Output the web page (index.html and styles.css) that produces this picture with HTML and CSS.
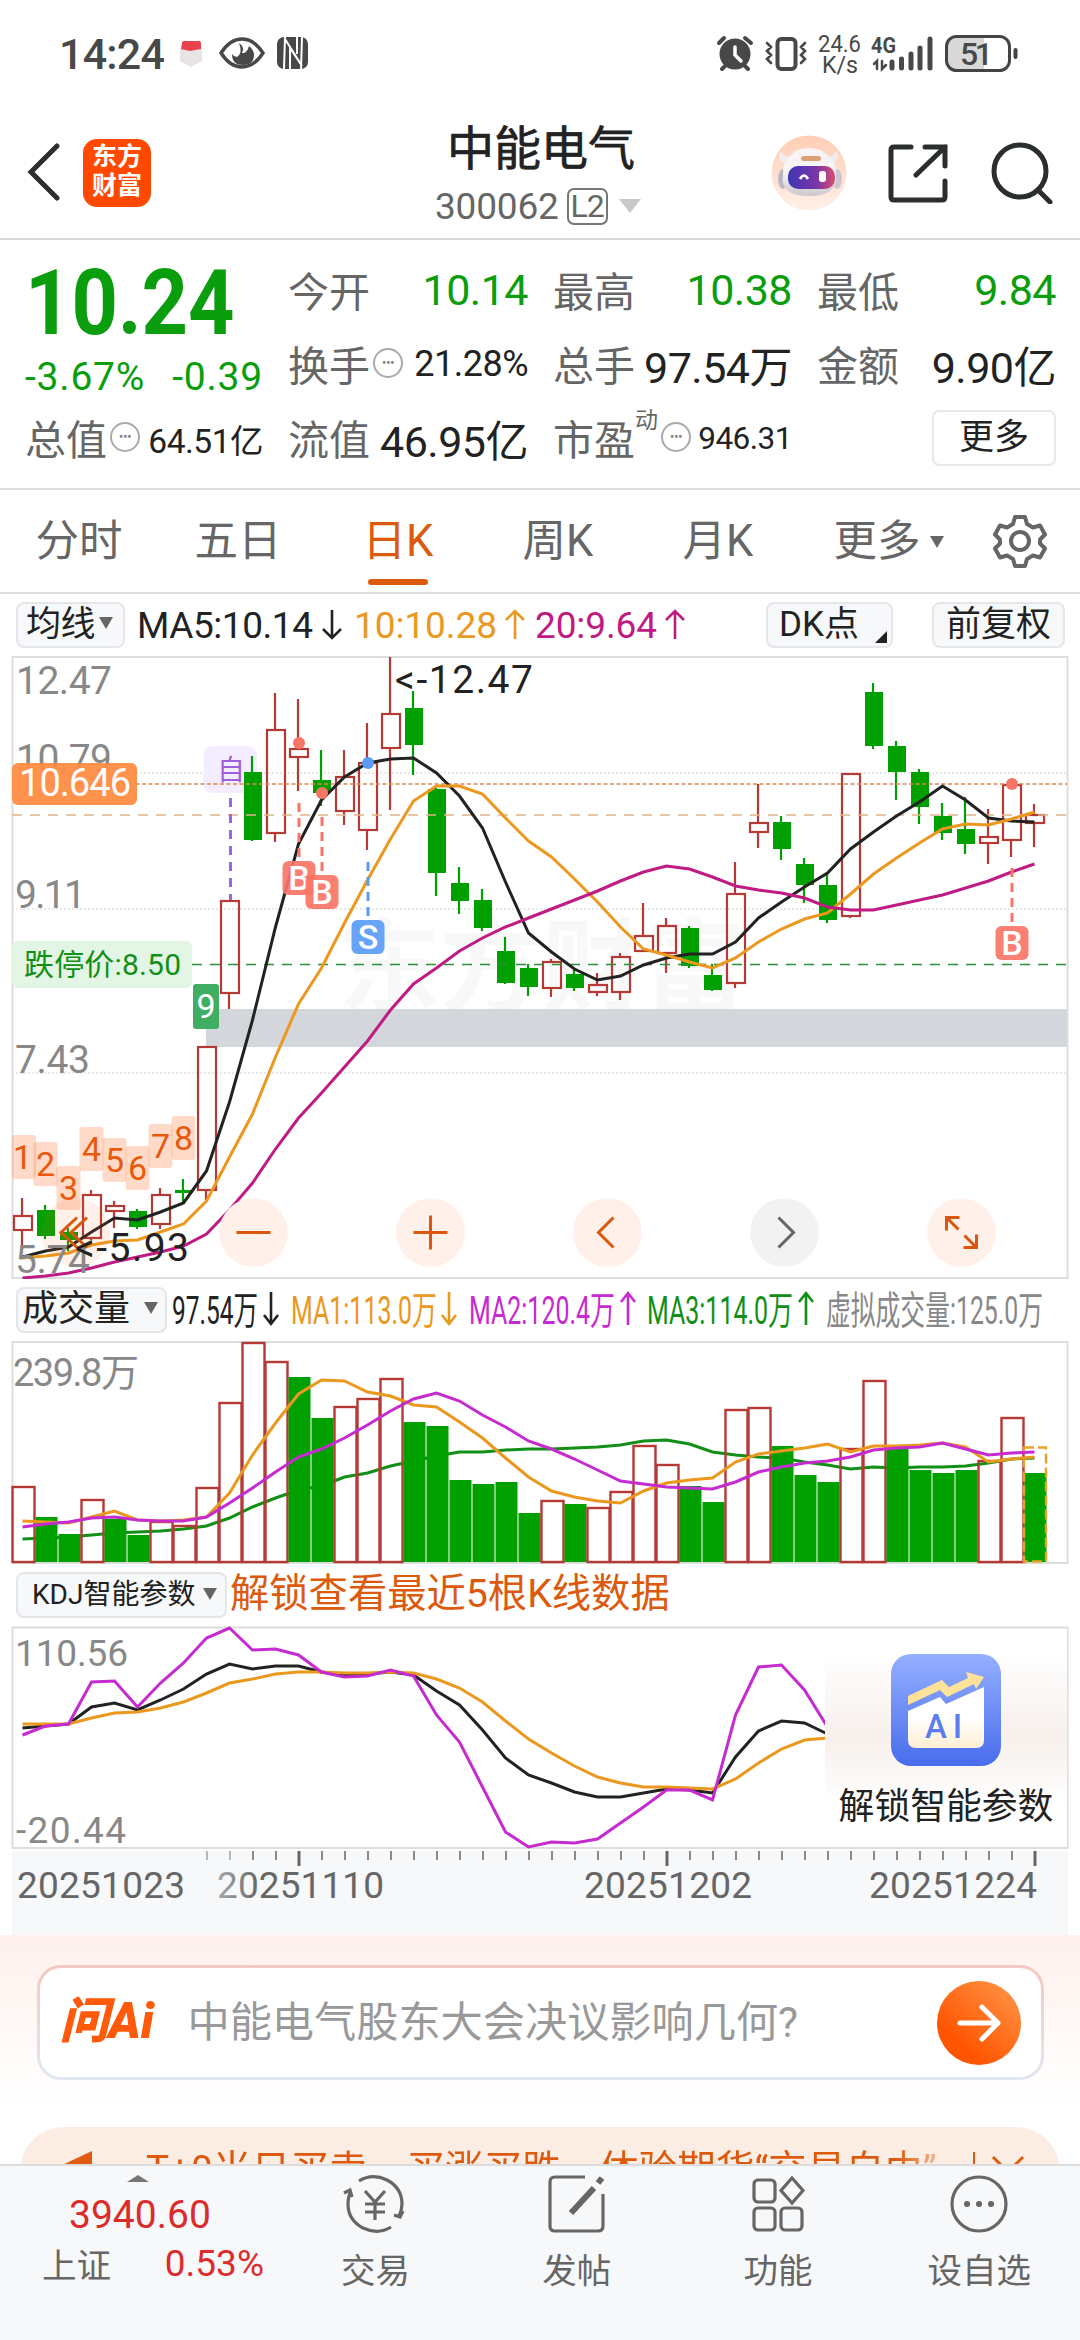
FILE: index.html
```html
<!DOCTYPE html>
<html lang="zh-CN">
  <head>
    <meta charset="UTF-8" />
    <meta name="viewport" content="width=device-width, initial-scale=1.0" />
    <title>中能电气 300062</title>
    <link rel="stylesheet" href="styles.css">
  </head>
  <body>
    <!-- 状态栏 -->
    <div class="status">
      <span class="clock">14:24</span>
      <svg class="status-left" width="130" height="40" viewBox="0 0 130 40">
        <path d="M1 15l11-3 11 3v12l-11 6-11-6z" fill="#e9e4e4" />
        <path d="M3 9q0-2 2-2h15q2 0 2 2v6l-11 2-9-2z" fill="#e8434b" />
        <path d="M42 19q9-14 21-14t21 14q-9 14-21 14T42 19z" fill="none" stroke="#484848" stroke-width="3.4" />
        <path d="M60 9q6 4 3 10 5 1 7-7 5 4 5 9 0 10-11 10T53 20q2 3 5 3 6-4 2-14z" fill="#484848" />
        <rect x="98" y="3" width="31" height="32" rx="7" fill="#484848" />
        <path d="M106 3l-1 32M122 35l1-32M106 5l17 27M111 14l12 18M111 13v22M118 3v17" fill="none" stroke="#fff" stroke-width="2" />
      </svg>
      <svg class="status-right" width="310" height="48" viewBox="714 30 310 48">
        <g fill="none" stroke="#484848" stroke-width="4" stroke-linecap="round">
          <path d="M719 43l5-5M745 38l6 5M725 66l-3 3M745 66l3 3" />
          <circle cx="735" cy="54" r="13.500" fill="#484848" />
          <path d="M735 47v8l6 6" stroke="#fff" stroke-width="3.500" />
          <rect x="777.500" y="39" width="18" height="30" rx="4" />
          <path d="M767 43l4 4-4 4 4 4-4 4 4 4M805 43l-4 4 4 4-4 4 4 4-4 4" stroke-width="2.600" />
          <path d="M877 69v-8l-3 3M882 61v8l4-4" stroke-width="2.500" />
          <path d="M892 62v6M901.500 59v9M911 54v14M920 48v20M930 39v29" stroke-width="5" />
        </g>
        <path d="M984 38h-30q-7 0-7 8v16q0 8 7 8h30z" fill="#d8d8d8" />
        <rect x="946.500" y="36.500" width="63" height="34" rx="10" fill="none" stroke="#444" stroke-width="3" />
        <path d="M1015.500 50v7" stroke="#444" stroke-width="4" stroke-linecap="round" />
        <text x="818" y="52" font-size="24" textLength="43" lengthAdjust="spacingAndGlyphs">24.6</text>
        <text x="822" y="73" font-size="24" textLength="36" lengthAdjust="spacingAndGlyphs">K/s</text>
        <text x="871" y="53" font-size="22" font-weight="700" textLength="25" lengthAdjust="spacingAndGlyphs">4G</text>
        <text x="960" y="65" font-size="32" font-weight="500" textLength="33">51</text>
      </svg>
    </div>

    <!-- 顶部标题栏 -->
    <div class="header">
      <svg class="back" width="34" height="60" viewBox="0 0 34 60"><path d="M31 4L5 30l26 26" /></svg>
      <div class="logo">东方<br>财富</div>
      <div class="title">
        <div class="name">中能电气</div>
        <div class="code">300062<span class="level">L2</span><i class="tri tri-light"></i></div>
      </div>
      <div class="header-icons">
        <svg width="76" height="76" viewBox="0 0 76 76">
          <defs>
            <linearGradient id="peach" x1="0" y1="0" x2="0" y2="1"><stop offset="0" stop-color="#ffcdb4" /><stop offset="1" stop-color="#fff0e9" /></linearGradient>
            <linearGradient id="visor"><stop offset="0" stop-color="#3f37b5" /><stop offset=".6" stop-color="#7a35a8" /><stop offset="1" stop-color="#d84f70" /></linearGradient>
            <linearGradient id="head" x1="0" y1="0" x2="0" y2="1"><stop offset=".5" stop-color="#f7f4f6" /><stop offset="1" stop-color="#cdc6cf" /></linearGradient>
          </defs>
          <circle cx="38" cy="38" r="37.500" fill="url(#peach)" />
          <path d="M10 16q-6 10 6 13l8-7q-10 2-14-6zM65 16q6 10-6 13l-8-7q10 2 14-6z" fill="#f0ebee" />
          <ellipse cx="12" cy="44" rx="5" ry="10" fill="#bbb6c4" />
          <ellipse cx="66" cy="44" rx="5" ry="10" fill="#cbc6d2" />
          <path d="M12 41q-1-14 8-21 6-7 18-7t18 7q10 7 9 21 2 20-27 20T12 41z" fill="url(#head)" />
          <rect x="30" y="21" width="20" height="5" rx="2.500" fill="#dda070" />
          <rect x="17" y="31" width="47" height="23" rx="10" fill="url(#visor)" />
          <path d="M29 44q4-7 8 0" fill="none" stroke="#fff" stroke-width="2.600" />
          <rect x="48" y="36" width="7" height="11" rx="3" fill="#fff" />
        </svg>
        <svg width="60" height="60" viewBox="0 0 60 60" class="line">
          <path d="M23 4H6q-3 0-3 3v47q0 3 3 3h48q3 0 3-3V38M37 4h20v19M57 4L28 32" />
        </svg>
        <svg width="62" height="62" viewBox="0 0 62 62" class="line">
          <circle cx="29" cy="29" r="26" /><path d="M47 48l12 12" />
        </svg>
      </div>
    </div>

    <!-- 行情数据 -->
    <div class="quote">
      <div class="col first">
        <div class="price">10.24</div>
        <div class="change"><span>-3.67%</span><span>-0.39</span></div>
        <div class="cell"><span class="label">总值</span><i class="info">•••</i><b class="w34">64.51亿</b></div>
      </div>
      <div class="col">
        <div class="cell"><span class="label">今开</span><b class="green">10.14</b></div>
        <div class="cell"><span class="label">换手</span><i class="info">•••</i><b class="w37">21.28%</b></div>
        <div class="cell"><span class="label">流值</span><b>46.95亿</b></div>
      </div>
      <div class="col">
        <div class="cell"><span class="label">最高</span><b class="green">10.38</b></div>
        <div class="cell"><span class="label">总手</span><b>97.54万</b></div>
        <div class="cell"><span class="label">市盈</span><sup>动</sup><i class="info">•••</i><b class="w32">946.31</b></div>
      </div>
      <div class="col">
        <div class="cell"><span class="label">最低</span><b class="green">9.84</b></div>
        <div class="cell"><span class="label">金额</span><b>9.90亿</b></div>
        <div class="cell"><button class="more">更多</button></div>
      </div>
    </div>

    <!-- 周期切换 -->
    <div class="tabs">
      <span>分时</span><span>五日</span><span class="active">日K</span><span>周K</span><span>月K</span>
      <span class="tab-more">更多<i class="tri tri-small"></i></span>
      <svg width="54" height="54" viewBox="0 0 54 54" class="gear">
        <path d="M22 3h10l2 7 6 3.500 7-2 5 9-5 5v4l5 5-5 9-7-2-6 3.500-2 7H22l-2-7-6-3.500-7 2-5-9 5-5v-4l-5-5 5-9 7 2 6-3.500z" />
        <circle cx="27" cy="27" r="9" />
      </svg>
    </div>

    <!-- 均线 -->
    <div class="bar">
      <span class="pill pill-ma">均线<i class="tri tri-small"></i></span>
      <svg class="legend" width="560" height="60" viewBox="130 596 560 60" font-size="37">
        <g fill="#222"><text x="137" y="639" textLength="176">MA5:10.14</text><path class="arrow" d="M332 611v28m-9-9l9 9 9-9" stroke="#222" /></g>
        <g fill="#eb981f"><text x="354" y="639" textLength="143">10:10.28</text><path class="arrow" d="M515 640v-28m-9 9l9-9 9 9" stroke="#eb981f" /></g>
        <g fill="#bf1b83"><text x="535" y="639" textLength="122">20:9.64</text><path class="arrow" d="M675 640v-28m-9 9l9-9 9 9" stroke="#bf1b83" /></g>
      </svg>
      <span class="pill pill-dk">DK点<i class="corner"></i></span>
      <span class="pill pill-fq">前复权</span>
    </div>
    <svg id="kline" width="1080" height="624" viewBox="0 655 1080 624"></svg>

    <!-- 成交量 -->
    <div class="bar">
      <span class="pill pill-vol">成交量<i class="tri tri-small"></i></span>
      <svg class="legend" width="890" height="60" viewBox="170 1281 890 60" font-size="39">
        <g fill="#222"><text x="172" y="1325" textLength="86" lengthAdjust="spacingAndGlyphs">97.54万</text><path class="arrow" d="M271 1293v32m-7-9l7 9 7-9" stroke="#222" /></g>
        <g fill="#eb981f"><text x="291" y="1325" textLength="146" lengthAdjust="spacingAndGlyphs">MA1:113.0万</text><path class="arrow" d="M449 1293v32m-7-9l7 9 7-9" stroke="#eb981f" /></g>
        <g fill="#c52bd0"><text x="469" y="1325" textLength="146" lengthAdjust="spacingAndGlyphs">MA2:120.4万</text><path class="arrow" d="M628 1326v-32m-7 9l7-9 7 9" stroke="#c52bd0" /></g>
        <g fill="#128f16"><text x="647" y="1325" textLength="146" lengthAdjust="spacingAndGlyphs">MA3:114.0万</text><path class="arrow" d="M806 1326v-32m-7 9l7-9 7 9" stroke="#128f16" /></g>
        <text x="826" y="1325" fill="#888" textLength="217" lengthAdjust="spacingAndGlyphs">虚拟成交量:125.0万</text>
      </svg>
    </div>
    <svg id="volume" width="1080" height="223" viewBox="0 1341 1080 223"></svg>

    <!-- KDJ -->
    <div class="bar bar-kdj">
      <span class="pill pill-kdj">KDJ智能参数<i class="tri tri-small"></i></span>
      <span class="unlock">解锁查看最近5根K线数据</span>
    </div>
    <div class="kdj-box">
      <svg id="kdj" width="1080" height="224" viewBox="0 1626 1080 224"></svg>
      <div class="lock">
        <svg width="110" height="112" viewBox="0 0 110 112">
          <defs>
            <linearGradient id="blue" x1="0" y1="0" x2="0" y2="1"><stop offset="0" stop-color="#95b0ff" /><stop offset="1" stop-color="#486cec" /></linearGradient>
            <linearGradient id="sheet" x1="0" y1="0" x2="0" y2="1"><stop offset=".5" stop-color="#fff" /><stop offset="1" stop-color="#ffefd2" /></linearGradient>
          </defs>
          <rect width="110" height="112" rx="20" fill="url(#blue)" />
          <path d="M17 57l32-14 6 7 38-17v53q0 8-8 8H25q-8 0-8-8z" fill="url(#sheet)" />
          <path d="M17 42l34-16 7 7 19-9-2-6 18 5-8 12-2-5-27 13-7-7-32 15z" fill="#ffe29a" />
          <text x="34" y="84" font-size="33" font-weight="500" fill="#5b7df0" textLength="37">AI</text>
        </svg>
        <span>解锁智能参数</span>
      </div>
    </div>
    <svg id="axis" width="1080" height="85" viewBox="0 1850 1080 85"></svg>

    <!-- 问AI -->
    <div class="ask-area">
      <div class="ask">
        <span class="ask-logo">问Ai</span>
        <span class="ask-text">中能电气股东大会决议影响几何?</span>
        <svg width="84" height="84" viewBox="0 0 84 84">
          <defs><linearGradient id="go" x1="1" y1="0" x2=".3" y2=".8"><stop offset="0" stop-color="#ff9a4b" /><stop offset="1" stop-color="#ff5400" /></linearGradient></defs>
          <circle cx="42" cy="42" r="42" fill="url(#go)" />
          <path d="M23 42h38M45 26l16 16-16 16" fill="none" stroke="#fff" stroke-width="5" stroke-linecap="round" stroke-linejoin="round" />
        </svg>
      </div>
      <div class="notice">
        <svg width="38" height="50" viewBox="0 0 38 50"><path d="M36 4v46L2 32V20z" fill="#e05a10" /></svg>
        <span class="notice-text">T+0当日买卖，买涨买跌，体验期货“交易自由”</span>
        <i class="divider"></i>
        <svg width="34" height="34" viewBox="0 0 34 34"><path d="M2 2l30 30M32 2L2 32" stroke="#e05a10" stroke-width="3" /></svg>
      </div>
    </div>

    <!-- 底部导航 -->
    <div class="nav">
      <div class="index">
        <i class="caret"></i>
        <div class="index-value">3940.60</div>
        <div class="index-row"><span>上证</span><span class="red">0.53%</span></div>
      </div>
      <div class="nav-item">
        <svg width="66" height="60" viewBox="0 0 66 60">
          <path d="M17 7Q30-1 45 6q15 8 15 24 0 6-3 12m4-5l-3 6-6-2M49 53q-13 8-28 1Q6 46 6 30q0-8 3-13M2 19l6-3 2 7" />
          <path d="M23 17l10 11 10-11M33 28v18M23 30h20M23 38h20" />
        </svg>
        <span>交易</span>
      </div>
      <div class="nav-item">
        <svg width="60" height="60" viewBox="0 0 60 60">
          <path d="M38 3H8q-5 0-5 5v44q0 5 5 5h43q5 0 5-5V20" />
          <path d="M24 39L47 14" stroke-width="6" /><path d="M51 9l4-5" stroke-width="6" />
        </svg>
        <span>发帖</span>
      </div>
      <div class="nav-item">
        <svg width="56" height="60" viewBox="0 0 56 60">
          <rect x="4" y="6" width="21" height="22" rx="4" /><rect x="4" y="34" width="21" height="22" rx="4" /><rect x="31" y="34" width="21" height="22" rx="4" />
          <path d="M42 4l11 12.500L42 29 31 16.500z" />
        </svg>
        <span>功能</span>
      </div>
      <div class="nav-item">
        <svg width="60" height="60" viewBox="0 0 60 60">
          <circle cx="30" cy="30" r="27" />
          <path d="M18 30h.1M30 30h.1M42 30h.1" stroke-width="6" stroke-linecap="round" />
        </svg>
        <span>设自选</span>
      </div>
    </div>

    <script src="script.js"></script>
  </body>
</html>
```
FILE: styles.css
```css
* {
  box-sizing: border-box;
}

body {
  margin: 0;
  width: 1080px;
  height: 2340px;
  overflow: hidden;
  display: flex;
  flex-direction: column;
  background: #fff;
  color: #222;
  font-family: Roboto, "Noto Sans CJK SC", sans-serif;
}

svg {
  display: block;
  flex: none;
}

i {
  font-style: normal;
}

.green {
  color: #0a9d0d;
}

.red {
  color: #dc2b2b;
}

/* 三角箭头 */
.tri {
  display: inline-block;
  border: solid transparent;
  border-bottom: 0;
}

.tri-light {
  border-width: 14px 11px 0;
  border-top-color: #c8c8c8;
  margin-left: 11px;
}

.tri-small {
  border-width: 12px 7px 0;
  border-top-color: #666;
}

/* 状态栏 */
.status {
  height: 108px;
  padding: 0 56px 0 59px;
  display: flex;
  align-items: center;
  color: #484848;
  fill: #484848;
}

.clock {
  font-size: 43px;
  font-weight: 500;
  letter-spacing: -0.8px;
  width: 120px;
}

.status-right {
  margin-left: auto;
}

/* 标题栏 */
.header {
  height: 132px;
  border-bottom: 2px solid #d8d8d8;
  display: flex;
  align-items: center;
  padding: 0 27px 0 26px;
}

.back path,
.line {
  fill: none;
  stroke: #2b2e2f;
  stroke-width: 5;
  stroke-linecap: round;
}

.back {
  margin-top: -2px;
}

.logo {
  width: 68px;
  height: 68px;
  margin-left: 23px;
  padding-top: 3px;
  border-radius: 14px;
  background: #ff4800;
  color: #fff;
  font-size: 25px;
  font-weight: 700;
  line-height: 29px;
  text-align: center;
}

.title {
  width: 240px;
  margin-left: 270px;
}

.name {
  height: 66px;
  line-height: 65px;
  font-size: 47px;
  text-align: center;
  -webkit-text-stroke: 0.7px #222;
}

.code {
  display: flex;
  align-items: center;
  height: 48px;
  margin-left: 14px;
  color: #666;
  font-size: 37px;
  letter-spacing: -0.2px;
}

.level {
  width: 41px;
  height: 37px;
  margin-left: 8px;
  border: 2px solid #777;
  border-radius: 7px;
  font-size: 32px;
  line-height: 33px;
  text-align: center;
  letter-spacing: -1px;
}

.header-icons {
  margin-left: auto;
  display: flex;
  align-items: center;
  gap: 41px;
}

.header-icons svg + svg + svg {
  margin-left: 2px;
}

/* 行情 */
.quote {
  height: 250px;
  padding: 12px 23px 0 25px;
  border-bottom: 2px solid #ddd;
  display: grid;
  grid-template-columns: 238px 240px 239px 239px;
  column-gap: 25px;
}

.col {
  display: grid;
  grid-template-rows: 75px 74px 74px;
}

.first {
  grid-template-rows: 100px 49px 74px;
}

.price {
  width: 225px;
  color: #0a9d0d;
  font-size: 90px;
  font-weight: 700;
  line-height: 104px;
  transform: scaleX(0.9);
  transform-origin: left;
}

.change {
  display: flex;
  justify-content: space-between;
  align-items: center;
  color: #0a9d0d;
  font-size: 39px;
}

.change span {
  letter-spacing: 0.8px;
}

.cell {
  display: flex;
  align-items: center;
  white-space: nowrap;
}

.cell b {
  margin-left: auto;
  font-size: 43px;
  font-weight: 400;
  letter-spacing: -0.5px;
}

.cell .w37 {
  font-size: 36px;
}

.cell .w34 {
  font-size: 33.5px;
}

.cell .w32 {
  font-size: 31.5px;
}

.label {
  color: #666;
  font-size: 41px;
  margin-top: -2px;
}

.cell sup {
  align-self: flex-start;
  color: #666;
  font-size: 23px;
}

.info {
  width: 30px;
  height: 30px;
  margin: -3px 0 0 3px;
  border: 2px solid #aaa;
  border-radius: 50%;
  color: #888;
  font-size: 14px;
  line-height: 26px;
  letter-spacing: -0.5px;
  text-align: center;
}

.more {
  width: 124px;
  height: 56px;
  margin-left: auto;
  padding: 0;
  border: 2px solid #e6e7ea;
  border-radius: 7px;
  background: #fff;
  color: #222;
  font: 35px/48px Roboto, "Noto Sans CJK SC", sans-serif;
}

/* 周期切换 */
.tabs {
  height: 104px;
  border-bottom: 2px solid #ddd;
  display: flex;
  align-items: center;
  color: #666;
  font-size: 43.5px;
}

.tabs > span {
  width: 160px;
  height: 102px;
  line-height: 104px;
  text-align: center;
}

.tabs > span:first-child {
  width: 158px;
}

.tabs > .active {
  color: #dc5a0e;
  display: flex;
  flex-direction: column;
  align-items: center;
}

.active::after {
  content: "";
  flex: none;
  width: 60px;
  height: 6px;
  margin-top: -15px;
  border-radius: 3px;
  background: #dc5a0e;
}

.tabs > .tab-more {
  width: 181px;
}

.tab-more .tri {
  margin-left: 9px;
  vertical-align: 8px;
}

.gear {
  margin-left: 14px;
  fill: none;
  stroke: #666;
  stroke-width: 4;
  stroke-linejoin: round;
}

/* 指标栏 */
.bar {
  height: 61px;
  padding-left: 16px;
  display: flex;
  align-items: center;
  white-space: nowrap;
}

.bar + #volume {
  margin-top: 1px;
}

.pill {
  height: 46px;
  padding: 0 9px;
  border: 2px solid #e4e6ea;
  border-radius: 8px;
  background: #f7f8fa;
  font-size: 35px;
  line-height: 41px;
  flex: none;
}

.pill .tri {
  margin-left: 4px;
  vertical-align: 7px;
}

.pill-ma {
  width: 109px;
  padding-left: 8px;
  letter-spacing: -0.5px;
}

.pill-dk {
  width: 127px;
  padding-left: 11px;
  margin-left: 76px;
  position: relative;
}

.pill-fq {
  width: 133px;
  padding-left: 12px;
  margin-left: 39px;
}

.pill-vol {
  width: 151px;
  padding-left: 4px;
  font-size: 36px;
}

.pill-vol .tri {
  margin-left: 14px;
}

.pill-kdj {
  width: 211px;
  padding-left: 14px;
  font-size: 28px;
}

.pill-kdj .tri {
  margin-left: 8px;
  vertical-align: 4px;
}

.corner {
  position: absolute;
  right: 4px;
  bottom: 3px;
  border-left: 12px solid transparent;
  border-bottom: 12px solid #222;
}

.pill-ma + .legend {
  margin-left: 5px;
}

.pill-vol + .legend {
  margin-left: 3px;
}

.arrow {
  fill: none;
  stroke-width: 2.6;
}

.bar-kdj {
  height: 62px;
}

.unlock {
  height: 62px;
  margin-left: 3px;
  line-height: 60px;
  color: #dc5a0e;
  font-size: 39.3px;
}

/* KDJ 解锁遮罩 */
.kdj-box {
  position: relative;
}

.lock {
  position: absolute;
  top: 3px;
  left: 825px;
  width: 242px;
  height: 218px;
  padding-top: 25px;
  display: flex;
  flex-direction: column;
  align-items: center;
  background: linear-gradient(#fff 10%, #f7f0ec 50%, #fff 80%);
  font-size: 35.8px;
}

.lock span {
  line-height: 44px;
  margin-top: 19px;
}

/* 问AI */
.ask-area {
  flex: 1;
  min-height: 0;
  overflow: hidden;
  padding-top: 30px;
  background: linear-gradient(#fff1ec, #fff 75%);
}

.ask {
  width: 1007px;
  height: 115px;
  margin: 0 auto;
  padding: 0 20px;
  border: 3px solid transparent;
  border-radius: 24px;
  background: linear-gradient(#fff, #fff) padding-box, linear-gradient(#f5c8c0, #dfe7f3) border-box;
  display: flex;
  align-items: center;
}

.ask-logo {
  width: 128px;
  color: #ff5a0a;
  font-size: 49px;
  font-weight: 900;
  font-style: italic;
  line-height: 60px;
  margin-top: -1px;
}

.ask-text {
  flex: 1;
  color: #999;
  font-size: 42.2px;
  line-height: 60px;
}

.notice {
  width: 1040px;
  height: 90px;
  margin: 47px auto 0;
  padding: 0 35px 0 36px;
  border-radius: 44px 44px 0 0;
  background: #fcede4;
  display: flex;
  align-items: center;
  color: #dc5a0e;
  font-size: 38.7px;
  white-space: nowrap;
}

.notice-text {
  width: 818px;
  margin-left: 52px;
  line-height: 60px;
  margin-top: -4px;
  overflow: hidden;
  -webkit-mask-image: linear-gradient(90deg, #000 92%, transparent);
}

.divider {
  width: 2px;
  height: 40px;
  margin: 0 16px 0 12px;
  background: #dc5a0e;
}

/* 底部导航 */
.nav {
  flex: none;
  height: 176px;
  border-top: 2px solid #dcdcdc;
  background: #f7f8fa;
  display: flex;
  color: #666;
  font-size: 34.5px;
}

.index {
  width: 275px;
  padding-top: 9px;
}

.caret {
  display: block;
  width: 0;
  margin-left: 127px;
  border: 11px solid transparent;
  border-top: 0;
  border-bottom: 7px solid #777;
}

.index-value {
  margin: 8px 0 0 69px;
  color: #dc2b2b;
  font-size: 39px;
  line-height: 50px;
}

.index-row {
  display: flex;
  align-items: center;
  justify-content: space-between;
  width: 222px;
  height: 46px;
  margin-left: 42px;
}

.index-row .red {
  font-size: 37px;
}

.nav-item {
  width: 201.5px;
  padding-top: 8px;
  display: flex;
  flex-direction: column;
  align-items: center;
}

.nav-item svg {
  fill: none;
  stroke: #666;
  stroke-width: 3.2;
}

.nav-item span {
  margin-top: 11px;
  line-height: 52px;
}
```
FILE: script.js
```js
// 每根K线: [涨跌, 最高, 实体上沿, 实体下沿, 最低, 成交量柱顶, 量柱颜色(与K线不同时)]
const candles = [
  ["r", 1198, 1215, 1231, 1247, 1486], ["g", 1205, 1210, 1236, 1239, 1517],
  ["g", 1228, 1232, 1240, 1251, 1534], ["r", 1190, 1194, 1239, 1240, 1499],
  ["r", 1201, 1205, 1212, 1228, 1519, "g"], ["g", 1209, 1211, 1227, 1229, 1535],
  ["r", 1188, 1194, 1225, 1229, 1521], ["g", 1179, 1190, 1193, 1203, 1525, "r"],
  ["r", 1046, 1046, 1191, 1200, 1487], ["r", 900, 900, 994, 1009, 1402],
  ["g", 756, 772, 840, 841, 1342, "r"], ["r", 693, 729, 834, 842, 1361],
  ["r", 699, 748, 758, 791, 1377, "g"], ["g", 750, 780, 793, 806, 1418],
  ["r", 750, 776, 812, 825, 1406], ["r", 723, 762, 831, 850, 1398],
  ["r", 657, 713, 749, 810, 1378], ["g", 691, 708, 745, 775, 1422],
  ["g", 788, 789, 873, 896, 1426], ["g", 867, 883, 901, 914, 1480],
  ["g", 889, 900, 928, 931, 1484], ["g", 937, 951, 983, 984, 1482],
  ["g", 964, 968, 987, 996, 1513], ["r", 959, 961, 989, 997, 1500],
  ["g", 970, 974, 988, 991, 1504], ["r", 973, 984, 993, 996, 1507],
  ["r", 953, 956, 993, 1000, 1491], ["r", 903, 935, 952, 952, 1445],
  ["r", 918, 925, 954, 973, 1464], ["g", 926, 928, 966, 968, 1486],
  ["g", 964, 975, 990, 991, 1502], ["r", 862, 893, 984, 988, 1409],
  ["r", 784, 822, 833, 848, 1407], ["g", 816, 822, 849, 860, 1446],
  ["g", 858, 864, 885, 903, 1475], ["g", 872, 885, 920, 923, 1482],
  ["r", 773, 773, 917, 918, 1448], ["g", 683, 692, 746, 749, 1380, "r"],
  ["g", 741, 746, 772, 800, 1448], ["g", 769, 772, 807, 824, 1470],
  ["g", 803, 816, 833, 840, 1473], ["g", 797, 829, 844, 854, 1470],
  ["r", 809, 836, 844, 864, 1460], ["r", 784, 784, 841, 857, 1417],
  ["r", 804, 814, 824, 847, 1473, "g"],
];

const ma5 = [1257, 1251, 1247, 1232, 1218, 1220, 1212, 1203, 1171, 1102, 1020, 927, 844, 800, 777, 763, 759, 758, 773, 796, 828, 882, 933, 952, 969, 980, 976, 965, 958, 954, 954, 942, 918, 902, 887, 873, 849, 832, 816, 802, 786, 800, 818, 821, 822];
const ma10 = [1258, 1256, 1253, 1245, 1241, 1240, 1232, 1224, 1201, 1157, 1114, 1057, 1004, 968, 923, 880, 839, 801, 786, 786, 794, 818, 841, 857, 879, 902, 927, 949, 955, 962, 968, 958, 942, 929, 919, 913, 894, 874, 858, 843, 829, 824, 825, 819, 812];
const ma20 = [1278, 1276, 1273, 1268, 1262, 1257, 1252, 1246, 1234, 1210, 1183, 1149, 1118, 1093, 1067, 1041, 1010, 984, 968, 951, 938, 927, 918, 909, 900, 891, 881, 872, 866, 869, 877, 886, 890, 893, 898, 907, 910, 910, 905, 900, 895, 888, 881, 872, 864];

const vol1 = [1521, 1522, 1523, 1517, 1511, 1520, 1521, 1520, 1517, 1493, 1455, 1423, 1394, 1380, 1381, 1392, 1396, 1405, 1407, 1422, 1438, 1458, 1477, 1491, 1497, 1501, 1503, 1491, 1483, 1480, 1478, 1462, 1454, 1451, 1448, 1444, 1452, 1446, 1446, 1445, 1443, 1447, 1462, 1459, 1457];
const vol2 = [1527, 1524, 1522, 1518, 1517, 1520, 1521, 1521, 1517, 1503, 1488, 1472, 1457, 1449, 1438, 1425, 1411, 1399, 1393, 1401, 1415, 1427, 1441, 1449, 1459, 1470, 1481, 1484, 1487, 1488, 1489, 1482, 1472, 1467, 1463, 1461, 1457, 1450, 1448, 1447, 1443, 1449, 1455, 1453, 1452];
const vol3 = [1539, 1538, 1537, 1535, 1533, 1532, 1531, 1529, 1526, 1518, 1507, 1498, 1490, 1486, 1477, 1473, 1466, 1461, 1456, 1452, 1452, 1450, 1449, 1449, 1448, 1447, 1445, 1441, 1440, 1444, 1452, 1455, 1457, 1458, 1462, 1465, 1469, 1467, 1468, 1467, 1467, 1466, 1463, 1459, 1458];

const kLine = [1728, 1726, 1724, 1707, 1703, 1710, 1700, 1689, 1674, 1664, 1669, 1666, 1666, 1672, 1675, 1674, 1672, 1675, 1691, 1705, 1730, 1758, 1775, 1783, 1792, 1797, 1797, 1793, 1789, 1790, 1793, 1757, 1731, 1721, 1723, 1734];
const dLine = [1724, 1724, 1724, 1718, 1713, 1712, 1708, 1702, 1693, 1683, 1679, 1674, 1672, 1672, 1673, 1673, 1672, 1673, 1679, 1688, 1702, 1721, 1739, 1753, 1766, 1777, 1783, 1787, 1787, 1788, 1789, 1779, 1763, 1749, 1740, 1738];
const jLine = [1735, 1726, 1724, 1682, 1681, 1707, 1683, 1663, 1638, 1628, 1650, 1649, 1655, 1672, 1677, 1676, 1670, 1676, 1715, 1742, 1787, 1832, 1847, 1842, 1843, 1839, 1823, 1807, 1790, 1790, 1800, 1715, 1667, 1665, 1690, 1727];

const RED = "#b53a36";
const GREEN = "#00a000";
const px = (i) => 22.5 + 23 * i;

function line(data, color) {
  const pts = data.map((y, i) => px(i) + "," + y).join(" ");
  return `<polyline points="${pts}" fill="none" stroke="${color}" stroke-width="3"/>`;
}

function frame(top, bottom) {
  return `<rect x="12.5" y="${top}" width="1055" height="${bottom - top}" fill="none" stroke="#ddd" stroke-width="2"/>`;
}

function hline(y, color, dash, x1) {
  return `<path d="M${x1 || 12} ${y}H1067" stroke="${color}" stroke-width="1.6" stroke-dasharray="${dash}"/>`;
}

function text(x, y, str, size, color, width) {
  return `<text x="${x}" y="${y}" font-size="${size}" fill="${color}" textLength="${width}">${str}</text>`;
}

// 买卖点标记
function mark(i, y, letter, color, from, dot) {
  const x = px(i) + .5;
  return `<path d="M${x} ${from}V${y}" stroke="${color}" stroke-width="3" stroke-dasharray="9 6"/>
    <circle cx="${x}" cy="${dot}" r="6" fill="${color}"/>
    <rect x="${x - 16.5}" y="${y}" width="33" height="34" rx="6" fill="${color}" opacity=".92"/>
    <text x="${x}" y="${y + 29}" font-size="34" font-weight="500" fill="#fff" text-anchor="middle">${letter}</text>`;
}

// 圆形操作按钮
function tool(cx, path, fill = "#fff1e9", stroke = "#d9580c") {
  return `<circle cx="${cx}" cy="1232.5" r="34.3" fill="${fill}"/>
    <path transform="translate(${cx} 1232.5)" d="${path}" fill="none" stroke="${stroke}" stroke-width="3"/>`;
}

function drawKline() {
  let s = `<text x="338" y="1004" font-size="102" font-weight="700" fill="#f8f8f8">东方财富</text>`;
  s += `<rect x="206" y="1009" width="861" height="38" fill="#d3d6db"/>`;
  s += hline(773, "#e2e2e2", "2 2") + hline(909, "#e2e2e2", "2 2") + hline(1073, "#e2e2e2", "2 2");
  s += frame(657, 1278);
  s += text(16, 694, "12.47", 39, "#888", 96) + text(16, 772, "10.79", 39, "#888", 96);
  s += text(15, 908, "9.11", 39, "#888", 71) + text(15, 1073, "7.43", 39, "#888", 75);
  s += `<rect x="203.5" y="746" width="53.5" height="47" rx="9" fill="#f4ecff"/>`;

  candles.forEach(([type, high, top, bottom, low], i) => {
    const x = px(i);
    const color = type === "r" ? RED : GREEN;
    s += `<path d="M${x - .5} ${high}V${top}M${x - .5} ${bottom}V${low}" stroke="${color}" stroke-width="2.2"/>`;
    s += type === "r"
      ? `<rect x="${x - 8.5}" y="${top + 1}" width="18" height="${bottom - top - 2}" fill="none" stroke="${color}" stroke-width="2.2"/>`
      : `<rect x="${x - 8.5}" y="${top}" width="18" height="${bottom - top}" fill="${color}"/>`;
  });

  s += hline(784, "#d98950", "4 2.5") + hline(815, "#dfb48a", "10 8") + hline(964.5, "#2d8f35", "10 8", 192);
  s += line(ma5, "#222") + line(ma10, "#eb981f") + line(ma20, "#bf1b83");

  s += `<path d="M230.5 798V900" stroke="#a463dc" stroke-width="3" stroke-dasharray="9 7"/>`;
  s += text(217, 780, "自", 28, "#9f5fda", 28);
  s += mark(12, 861, "B", "#f87566", 803, 743) + mark(13, 875, "B", "#f87566", 817, 793);
  s += mark(15, 920, "S", "#5a9bf6", 862, 763) + mark(43, 926, "B", "#f87566", 868, 784);

  s += `<rect x="12" y="763" width="125" height="42" rx="6" fill="#ff8b42" opacity=".94"/>` + text(19, 796, "10.646", 38, "#fff", 112);
  s += `<rect x="12" y="941" width="180" height="47" rx="6" fill="#e3f5e4"/>` + text(24, 975, "跌停价:8.50", 30, "#128f16", 157);

  // 九转序列
  [1135, 1142, 1166, 1127, 1138, 1146, 1124, 1116].forEach((y, i) => {
    s += `<rect x="${i ? px(i) - 12 : 12}" y="${y}" width="24" height="44" rx="3" fill="#ff7832" opacity=".27"/>`;
    s += `<text x="${px(i)}" y="${y + 34}" font-size="34" fill="#e8590c" text-anchor="middle">${i + 1}</text>`;
  });
  s += `<rect x="193" y="984" width="26" height="45" rx="3" fill="#3fae63"/>`;
  s += `<text x="206" y="1018" font-size="34" fill="#fff" text-anchor="middle">9</text>`;

  s += tool(76, "M1-15L-15 0 1 15M11-15L-5 0 11 15", "rgba(255, 110, 40, .1)");
  s += text(15, 1273, "5.74", 39, "#888", 75);
  s += text(395, 693, "&lt;-12.47", 39, "#222", 138) + text(75, 1261, "&lt;-5.93", 39, "#222", 114);
  s += tool(253.5, "M-17 0H17") + tool(430.5, "M-17 0H17M0-17V17");
  s += tool(607.5, "M6-15L-9 0 6 15") + tool(784.5, "M-6-15L9 0-6 15", "#f2f2f2", "#666");
  s += tool(961.5, "M-2-15H-15V-2M-15-15L-3-3M2 15H15V2M15 15L3 3");
  document.getElementById("kline").innerHTML = s;
}

function drawVolume() {
  let s = frame(1342, 1563) + text(13, 1386, "239.8万", 38, "#888", 126);
  // 绿色均线在量柱下面
  s += line(vol3, "#128f16");
  candles.forEach((c, i) => {
    const x = px(i) + .5;
    const type = c[6] || c[0];
    s += type === "r"
      ? `<rect x="${x - 10.5}" y="${c[5] + 1}" width="22" height="${1561 - c[5]}" fill="none" stroke="${RED}" stroke-width="2.4"/>`
      : `<rect x="${x - 10.5}" y="${c[5]}" width="22" height="${1562 - c[5]}" fill="${GREEN}"/>`;
  });
  s += `<rect x="1024" y="1447.5" width="22" height="114" fill="none" stroke="#e5a32b" stroke-width="2.4" stroke-dasharray="10 4"/>`;
  s += line(vol1, "#eb981f") + line(vol2, "#c52bd0");
  document.getElementById("volume").innerHTML = s;
}

function drawKdj() {
  document.getElementById("kdj").innerHTML = frame(1627.5, 1848)
    + text(15, 1666, "110.56", 37, "#888", 113) + text(16, 1843, "-20.44", 37, "#888", 110)
    + line(kLine, "#222") + line(dLine, "#eb981f") + line(jLine, "#c52bd0");
}

function drawAxis() {
  let s = `<rect x="12" y="1851" width="1056" height="84" fill="#f7f8fa"/>`;
  for (let i = 8; i < 45; i++) {
    const major = i % 16 === 12;
    s += `<path d="M${px(i) + .5} 1851V${major ? 1866 : 1860}" stroke="#666" stroke-width="${major ? 3 : 1.5}" ${i < 10 ? 'opacity=".6"' : ""}/>`;
  }
  s += `<defs><linearGradient id="fade"><stop offset="0" stop-color="#aaa"/><stop offset=".25" stop-color="#666"/></linearGradient></defs>`;
  s += text(17, 1898, "20251023", 37, "#666", 168) + text(217, 1898, "20251110", 37, "url(#fade)", 167);
  s += text(584, 1898, "20251202", 37, "#666", 168) + text(869, 1898, "20251224", 37, "#666", 168);
  document.getElementById("axis").innerHTML = s;
}

drawKline();
drawVolume();
drawKdj();
drawAxis();
```
